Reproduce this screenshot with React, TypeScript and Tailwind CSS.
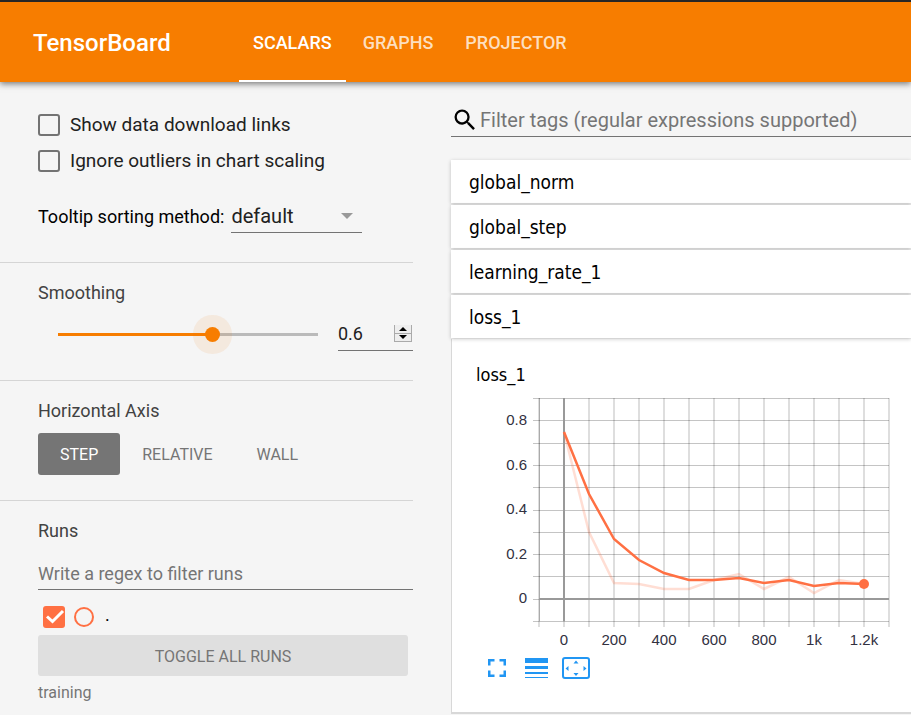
import React from "react";

const RUN_COLOR = "#ff7043";
const TABS = ["SCALARS", "GRAPHS", "PROJECTOR"];
const TAGS = ["global_norm", "global_step", "learning_rate_1", "loss_1"];

const SMOOTHED = [432, 494, 539, 560, 573, 580, 580, 578, 583, 580, 586, 583, 584];
const RAW = [432, 532, 583, 584, 589, 589, 580, 574, 589, 577, 593, 580, 584];

const toPoints = (ys: number[]) => ys.map((y, i) => `${100 + i * 25},${y - 388}`).join(" ");

function Checkbox({ id, label }: { id: string; label: string }) {
  return (
    <div className="flex h-9 items-center gap-2.5">
      <input
        id={id}
        type="checkbox"
        className="size-[22px] shrink-0 appearance-none rounded-[3px] border-2 border-[#737373]"
      />
      <label htmlFor={id} className="text-[19px] leading-7 text-[#212121]">
        {label}
      </label>
    </div>
  );
}

function Sidebar() {
  return (
    <aside className="w-[413px] shrink-0 pt-[25px] text-lg text-[#424242]">
      <section className="border-b border-[#d5d5d5] pb-[29px] pl-[38px]">
        <Checkbox id="download" label="Show data download links" />
        <Checkbox id="outliers" label="Ignore outliers in chart scaling" />
        <div className="mt-5 flex h-[34px] items-center gap-[7px] text-black">
          <label htmlFor="sorting" className="pt-0.5 whitespace-nowrap">
            Tooltip sorting method:
          </label>
          <div className="relative w-[131px]">
            <select
              id="sorting"
              className="h-[34px] w-full appearance-none border-b border-[#737373] bg-transparent text-xl text-[#212121]"
            >
              <option>default</option>
            </select>
            <svg className="pointer-events-none absolute top-3.5 right-[9px] h-1.5 w-3" viewBox="0 0 12 6">
              <path d="M0 0h12L6 6z" fill="#999" />
            </svg>
          </div>
        </div>
      </section>

      <section className="border-b border-[#d5d5d5] pt-4 pb-[26px] pl-[38px]">
        <h3 className="leading-7">Smoothing</h3>
        <div className="mt-[7px] flex items-center">
          <input
            type="range"
            aria-label="Smoothing"
            min="0"
            max="1"
            step="0.1"
            defaultValue="0.6"
            className="mx-5 h-10 min-w-0 flex-1 appearance-none bg-transparent [&::-webkit-slider-runnable-track]:h-[3px] [&::-webkit-slider-runnable-track]:bg-[linear-gradient(to_right,#f77d00_60%,#bababa_60%)] [&::-webkit-slider-thumb]:-mt-1.5 [&::-webkit-slider-thumb]:size-[15px] [&::-webkit-slider-thumb]:appearance-none [&::-webkit-slider-thumb]:rounded-full [&::-webkit-slider-thumb]:bg-[#f77d00] [&::-webkit-slider-thumb]:shadow-[0_0_0_12px_rgba(247,125,0,0.09)]"
          />
          <div className="flex h-[34px] w-[75px] items-center justify-between border-b border-[#737373]">
            <input
              type="number"
              aria-label="Smoothing value"
              step="0.1"
              defaultValue="0.6"
              className="w-12 appearance-none bg-transparent text-lg text-[#212121] [appearance:textfield]"
            />
            <div className="mr-px flex h-[17px] w-[18px] flex-col border border-t-0 border-[#aaa] bg-[#eee]">
              <button aria-label="Increase" className="flex flex-1 items-center justify-center border-b border-[#aaa]">
                <svg className="h-1 w-2" viewBox="0 0 8 4">
                  <path d="M0 4h8L4 0z" />
                </svg>
              </button>
              <button aria-label="Decrease" className="flex flex-1 items-center justify-center">
                <svg className="h-1 w-2" viewBox="0 0 8 4">
                  <path d="M0 0h8L4 4z" />
                </svg>
              </button>
            </div>
          </div>
        </div>
      </section>

      <section className="border-b border-[#d5d5d5] pt-4 pb-[25px] pl-[38px]">
        <h3 className="leading-7">Horizontal Axis</h3>
        <div className="mt-2 flex h-[42px] text-base text-[#757575]">
          <button className="rounded-[3px] bg-[#757575] px-[22px] pt-0.5 text-white">STEP</button>
          <button className="px-[22px] pt-0.5">RELATIVE</button>
          <button className="px-[22px] pt-0.5">WALL</button>
        </div>
      </section>

      <section className="pt-4 pl-[38px]">
        <h3 className="leading-7">Runs</h3>
        <input
          type="text"
          aria-label="Write a regex to filter runs"
          placeholder="Write a regex to filter runs"
          className="mt-3 block h-[33px] w-full border-b border-[#737373] bg-transparent text-lg placeholder:text-[#757575]"
        />
        <div className="mt-4 flex h-[22px] items-center gap-[9px] pl-[5px] text-black">
          <label className="relative size-[22px]">
            <input
              type="checkbox"
              aria-label="Show run"
              defaultChecked
              className="block size-[22px] appearance-none rounded-[3px] bg-[#ff7043]"
            />
            <svg className="pointer-events-none absolute inset-0 size-[22px]" viewBox="0 0 22 22">
              <path d="M4 10.500l5.500 5L20 5" fill="none" stroke="#fff" strokeWidth="3" />
            </svg>
          </label>
          <input
            type="radio"
            aria-label="Show only this run"
            className="size-5 appearance-none rounded-full border-2 border-[#ff7043]"
          />
          <span className="pb-1 pl-0.5">.</span>
        </div>
        <button className="mt-[7px] block h-[41px] w-[370px] rounded-[3px] bg-[#dfdfdf] pt-0.5 text-base text-[#757575]">
          TOGGLE ALL RUNS
        </button>
        <p className="mt-[5px] text-base leading-6 text-[#757575]">training</p>
      </section>
    </aside>
  );
}

function Chart() {
  const columns = Array.from({ length: 15 }, (_, i) => 75 + i * 25);
  const rows = Array.from({ length: 11 }, (_, i) => Math.round(10 + i * 22.3));
  const yLabels = ["0.8", "0.6", "0.4", "0.2", "0"];
  const xLabels = ["0", "200", "400", "600", "800", "1k", "1.2k"];
  return (
    <svg
      className="mt-px block h-[266px] w-[440px] font-['Liberation_Sans',Arial,sans-serif] text-[15px]"
      viewBox="0 0 440 266"
      role="img"
      aria-label="loss_1 chart"
    >
      <g stroke="#000" strokeOpacity="0.13" strokeWidth="2">
        {columns.map((x) => (
          <line key={x} x1={x} x2={x} y1="10" y2="239" />
        ))}
      </g>
      <g stroke="#000" strokeOpacity="0.23">
        {rows.map((y) => (
          <line key={y} x1="69" x2="425" y1={y + 0.5} y2={y + 0.5} />
        ))}
        <line x1="75.500" x2="75.500" y1="10" y2="233" />
      </g>
      <path d="M100 10V233M75 211H425" stroke="#999" strokeWidth="2" />
      <polyline points={toPoints(RAW)} fill="none" stroke={RUN_COLOR} strokeOpacity="0.23" strokeWidth="2.500" />
      <polyline points={toPoints(SMOOTHED)} fill="none" stroke={RUN_COLOR} strokeWidth="2.500" />
      <circle cx="400" cy="196" r="5" fill={RUN_COLOR} />
      <g fill="#32313f">
        {yLabels.map((t, i) => (
          <text key={t} x="63" y={37 + Math.round(i * 44.6)} textAnchor="end">
            {t}
          </text>
        ))}
        {xLabels.map((t, i) => (
          <text key={t} x={100 + i * 50} y="257" textAnchor="middle">
            {t}
          </text>
        ))}
      </g>
    </svg>
  );
}

function ChartActions() {
  return (
    <div className="mt-0.5 flex h-6 items-center gap-3.5 pl-6 text-[#2196f3]">
      <button aria-label="Toggle fullscreen" className="mr-[5px] size-[18px]">
        <svg className="size-[18px]" viewBox="0 0 18 18" fill="none" stroke="currentColor" strokeWidth="2.500">
          <path d="M1.250 6.500V1.250H6.500M11.500 1.250H16.750V6.500M16.750 11.500V16.750H11.500M6.500 16.750H1.250V11.500" />
        </svg>
      </button>
      <button aria-label="Toggle y-axis log scale" className="h-5 w-[23px]">
        <svg className="h-5 w-[23px]" viewBox="0 0 23 20" fill="currentColor">
          <path d="M0 0h23v5H0zM0 8h23v3H0zM0 14h23v2H0zM0 19h23v1H0z" />
        </svg>
      </button>
      <button aria-label="Fit domain to data" className="h-[22px] w-7">
        <svg className="h-[22px] w-7" viewBox="0 0 28 22" fill="currentColor">
          <rect x="1" y="1" width="26" height="20" rx="2" fill="none" stroke="currentColor" strokeWidth="2" />
          <path d="M14 3.500l2.500 3h-5zM14 19l2.500-3h-5zM3.500 11.500l3-2.500v5zM24.500 11.500l-3-2.500v5z" />
        </svg>
      </button>
    </div>
  );
}

export default function App() {
  return (
    <div className="min-h-screen overflow-hidden bg-[#f5f5f5] font-[Roboto,sans-serif]">
      <header className="relative flex h-[82px] border-t-2 border-[#262626] bg-[#f77d00] pl-[33px] shadow-[0_2px_6px_rgba(0,0,0,0.5)]">
        <h1 className="flex w-[206px] items-center pt-0.5 text-2xl font-medium text-white">TensorBoard</h1>
        <nav className="flex text-lg font-medium">
          {TABS.map((tab, i) => (
            <a
              key={tab}
              href={`#${tab.toLowerCase()}`}
              className={
                i === 0
                  ? "mr-px flex items-center border-b-2 border-white px-3.5 pt-1 text-white"
                  : "flex items-center border-b-2 border-transparent px-4 pt-1 text-[#fddfbf]"
              }
            >
              {tab}
            </a>
          ))}
        </nav>
      </header>

      <div className="flex gap-[38px]">
        <Sidebar />
        <main className="min-w-0 flex-1 pt-[22px] font-['DejaVu_Sans_Condensed','DejaVu_Sans',sans-serif]">
          <div className="flex h-[33px] items-center border-b border-[#737373]">
            <svg className="size-7 shrink-0" viewBox="0 0 24 24">
              <path d="M15.500 14h-.79l-.28-.27A6.471 6.471 0 0 0 16 9.500 6.500 6.500 0 1 0 9.500 16c1.610 0 3.090-.59 4.230-1.570l.27.28v.79l5 4.990L20.490 19l-4.990-5zm-6 0C7.010 14 5 11.990 5 9.500S7.010 5 9.500 5 14 7.010 14 9.500 11.990 14 9.500 14z" />
            </svg>
            <input
              type="text"
              aria-label="Filter tags"
              placeholder="Filter tags (regular expressions supported)"
              className="min-w-0 flex-1 bg-transparent pl-px font-[Roboto,sans-serif] text-xl placeholder:text-[#757575]"
            />
          </div>
          <div className="mt-[23px] flex flex-col gap-0.5">
            {TAGS.map((tag) => (
              <button
                key={tag}
                className="h-[43px] bg-white pl-[18px] text-left text-[19px] leading-7 shadow-[0_1px_4px_rgba(0,0,0,0.22)]"
              >
                {tag}
              </button>
            ))}
          </div>
          <section className="mt-px overflow-hidden border-b-2 border-l border-[#d8d8d8] bg-white pt-6 pb-8 pl-3">
            <h2 className="pl-3 text-lg leading-6">loss_1</h2>
            <Chart />
            <ChartActions />
          </section>
        </main>
      </div>
    </div>
  );
}
